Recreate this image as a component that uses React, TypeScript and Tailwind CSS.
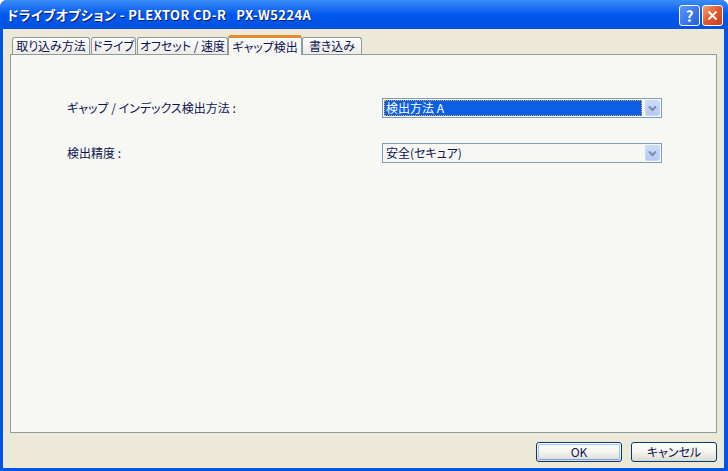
import React from 'react';

const font = { fontFamily: '"Noto Sans CJK JP", "Liberation Sans", sans-serif' };

function Chevron() {
  return (
    <svg width="9" height="7" viewBox="0 0 9 7">
      <path d="M1 1.5 L4.5 5 L8 1.5" fill="none" stroke="#7b8aa5" strokeWidth="2" />
    </svg>
  );
}

function Dropdown({ value, focused }: { value: string; focused?: boolean }) {
  return (
    <div className="w-[280px] h-[20px] border border-[#7f9db9] bg-[#f7f7f3] flex items-center p-px">
      <div className="flex-1 h-full pr-[3px]">
        {focused ? (
          <div className="h-full bg-[#0b5fe4] border border-dotted border-[#f2a33a] text-white text-[12px] leading-[14px] pl-[1px] whitespace-nowrap">
            {value}
          </div>
        ) : (
          <div className="h-full text-[12px] leading-[16px] pl-[2px] text-[#0d1452] whitespace-nowrap">{value}</div>
        )}
      </div>
      <div className="w-[15px] h-full rounded-[2px] bg-gradient-to-b from-[#cddcfc] to-[#b4c9f6] border border-[#c9d8fa] flex items-center justify-center">
        <Chevron />
      </div>
    </div>
  );
}

function Tab({ label, w, active, ml }: { label: string; w: string; active?: boolean; ml?: string }) {
  if (active) {
    return (
      <div
        className={`${w} ${ml ?? ''} h-[20px] -mb-px relative z-10 bg-[#f7f7f3] border-x border-[#919b9c] rounded-t-[3px] border-t-[3px] border-t-[#e68b2c] flex items-center justify-center text-[12px] text-[#0d1452] whitespace-nowrap`}
      >
        {label}
      </div>
    );
  }
  return (
    <div
      className={`${w} ${ml ?? ''} h-[17px] bg-gradient-to-b from-[#fefefe] to-[#ecebe5] border border-b-0 border-[#919b9c] rounded-t-[3px] flex items-center justify-center text-[12px] text-[#0d1452] whitespace-nowrap`}
    >
      {label}
    </div>
  );
}

function XpButton({ label, isDefault }: { label: string; isDefault?: boolean }) {
  return (
    <div className="w-[86px] h-[20px] rounded-[3px] border border-[#003c74] bg-gradient-to-b from-[#ffffff] via-[#f4f4f0] to-[#dcdad0] p-px">
      <div
        className={`h-full rounded-[2px] flex items-center justify-center text-[12px] text-[#0d1452] ${
          isDefault ? 'border border-[#aac5f4] border-b-[#7d9ee6]' : ''
        }`}
      >
        {label}
      </div>
    </div>
  );
}

export default function App() {
  return (
    <div
      style={font}
      className="w-[728px] h-[471px] flex flex-col bg-[#0054e3] rounded-t-[7px] overflow-hidden [font-feature-settings:'palt']"
    >
      {/* title bar */}
      <div className="h-[29px] flex items-center bg-gradient-to-b from-[#3b8cf7] via-[#0058ee] to-[#0052e0] pl-[7px] pr-[5px]">
        <div
          className="flex-1 text-white font-bold text-[13px] tracking-[0.4px] whitespace-pre"
          style={{ textShadow: '1px 1px 0 #0a1c6e' }}
        >
          ドライブオプション - PLEXTOR CD-R   PX-W5224A
        </div>
        <div className="flex gap-[2px] mt-[2px]">
          <div className="w-[21px] h-[21px] rounded-[3px] border border-white bg-gradient-to-br from-[#5d97f5] to-[#1f5fe0] flex items-center justify-center text-white font-bold text-[15px] leading-none">
            ?
          </div>
          <div className="w-[21px] h-[21px] rounded-[3px] border border-white bg-gradient-to-br from-[#f0a070] via-[#e0582e] to-[#c8401c] flex items-center justify-center">
            <svg width="11" height="11" viewBox="0 0 11 11">
              <path d="M1.5 1.5 L9.5 9.5 M9.5 1.5 L1.5 9.5" stroke="white" strokeWidth="2" />
            </svg>
          </div>
        </div>
      </div>

      {/* body */}
      <div className="flex-1 ml-[3px] mr-[4px] mb-[3px] bg-[#ece9d8] px-[7px] pt-[6px] flex flex-col">
        <div className="flex items-end pl-[2px]">
          <Tab label="取り込み方法" w="w-[78px]" />
          <Tab label="ドライブ" w="w-[45px]" ml="ml-px" />
          <Tab label="オフセット / 速度" w="w-[91px]" ml="ml-px" />
          <Tab label="ギャップ検出" w="w-[74px]" active />
          <Tab label="書き込み" w="w-[60px]" />
        </div>
        <div className="h-[379px] border border-[#919b9c] bg-[#f7f7f3] pt-[43px] pl-[56px] flex flex-col gap-[25px]">
          <div className="flex items-center">
            <div className="w-[315px] text-[12px] text-[#0d1452] whitespace-nowrap">ギャップ / インデックス検出方法 :</div>
            <Dropdown value="検出方法 A" focused />
          </div>
          <div className="flex items-center">
            <div className="w-[315px] text-[12px] text-[#0d1452]">検出精度 :</div>
            <Dropdown value="安全(セキュア)" />
          </div>
        </div>
        <div className="flex justify-end gap-[9px] mt-[9px]">
          <XpButton label="OK" isDefault />
          <XpButton label="キャンセル" />
        </div>
      </div>
    </div>
  );
}
